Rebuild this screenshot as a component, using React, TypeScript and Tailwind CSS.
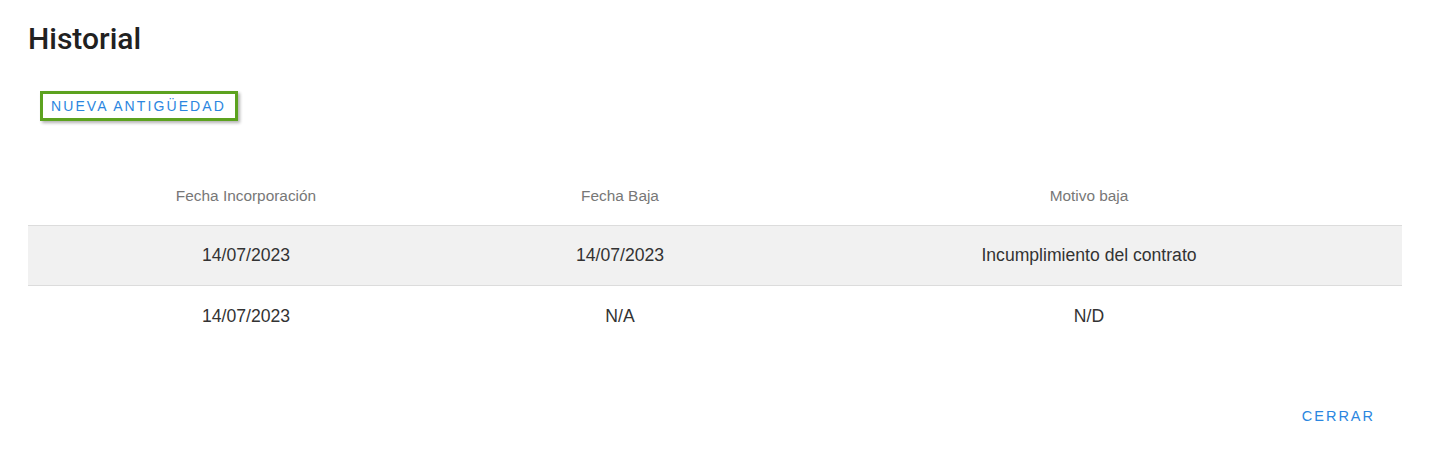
export default function App() {
  const rows = [
    { alta: "14/07/2023", baja: "14/07/2023", motivo: "Incumplimiento del contrato" },
    { alta: "14/07/2023", baja: "N/A", motivo: "N/D" },
  ];

  return (
    <div className="h-[458px] w-[1430px] bg-white font-['Liberation_Sans',Arial,sans-serif]">
      <div className="px-7 pt-[22px]">
        <h2 className="font-['Roboto',sans-serif] text-[30px] font-medium leading-[34px] text-[#212121]">
          Historial
        </h2>

        <div className="mt-[35px] pl-3">
          <button className="h-[30px] border-[3px] border-[#5ca21f] pl-2 pr-[9px] text-[14px] tracking-[2.1px] text-[#2b86e0] shadow-[2px_2px_3px_rgba(0,0,0,0.3)]">
            NUEVA ANTIGÜEDAD
          </button>
        </div>

        <div className="mt-[45px] w-[1374px]">
          <div className="grid h-[59px] grid-cols-[436px_312px_626px] items-center text-center text-[15.4px] text-[#777]">
            <div>Fecha Incorporación</div>
            <div>Fecha Baja</div>
            <div>Motivo baja</div>
          </div>
          {rows.map((r, i) => (
            <div
              key={i}
              className={`grid h-[60px] grid-cols-[436px_312px_626px] items-center border-t border-[#dcdcdc] text-center text-[17.6px] text-[#333] ${
                i === 0 ? "bg-[#f1f1f1]" : "pt-[2px]"
              }`}
            >
              <div>{r.alta}</div>
              <div>{r.baja}</div>
              <div>{r.motivo}</div>
            </div>
          ))}
        </div>

        <div className="mt-[61px] flex justify-end pr-[27px]">
          <button className="text-[14.5px] tracking-[2px] text-[#2b86e0]">CERRAR</button>
        </div>
      </div>
    </div>
  );
}
